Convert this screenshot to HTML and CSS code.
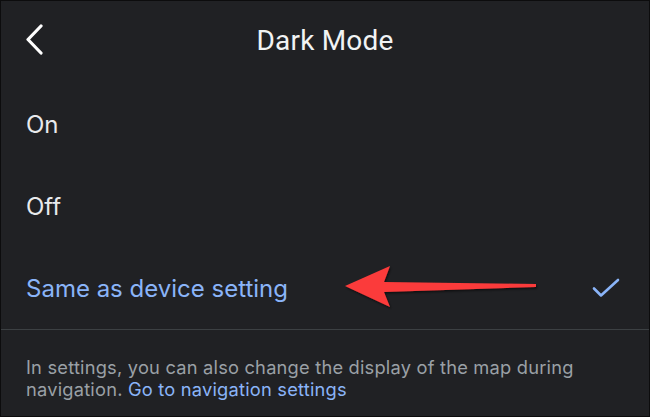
FILE: index.html
```html
<!DOCTYPE html>
<html>
<head>
<meta charset="utf-8">
<link rel="stylesheet" href="styles.css">
</head>
<body>
<div class="screen">
  <header class="topbar">
    <div class="back">
      <svg width="22" height="32" viewBox="0 0 22 32"><path d="M17 2 L4 15.5 L17 29" fill="none" stroke="#ffffff" stroke-width="3.2" stroke-linecap="round" stroke-linejoin="round"/></svg>
    </div>
    <h1 class="title">Dark Mode</h1>
    <div></div>
  </header>
  <ul class="options">
    <li class="option">On</li>
    <li class="option">Off</li>
    <li class="option selected">
      <span>Same as device setting</span>
      <svg class="check" width="30" height="22" viewBox="0 0 30 22"><path d="M3 11.5 L10 18.5 L27 3" fill="none" stroke="#8ab4f8" stroke-width="2.6" stroke-linecap="round" stroke-linejoin="round"/></svg>
    </li>
  </ul>
  <p class="note">In settings, you can also change the display of the map during navigation. <a class="link">Go to navigation settings</a></p>
  <svg class="arrow" width="200" height="50" viewBox="0 0 200 50">
    <defs><filter id="sh" x="-10%" y="-30%" width="120%" height="160%"><feDropShadow dx="1" dy="1.5" stdDeviation="1.2" flood-color="#000" flood-opacity="0.6"/></filter></defs>
    <path filter="url(#sh)" d="M2 22 L47 2 L41 18 L193 20 L193 23 L41 28 L47 43 Z" fill="#fb3b3b"/>
  </svg>
</div>
</body>
</html>
```
FILE: styles.css
```css
* { box-sizing: border-box; }
html, body { margin: 0; padding: 0; background: #202124; }
.screen {
  position: relative;
  width: 650px;
  height: 417px;
  background: #202124;
  border: 1px solid #0c0c0d;
  font-family: Inter, "Noto Sans", sans-serif;
  overflow: hidden;
}
.topbar {
  display: grid;
  grid-template-columns: 1fr auto 1fr;
  align-items: center;
  height: 78px;
  padding: 0 23px;
}
.back { display: flex; align-items: center; height: 32px; }
.title {
  margin: 0;
  font-family: Roboto, sans-serif;
  font-weight: 400;
  font-size: 28px;
  color: #f1f3f4;
  letter-spacing: 0.2px;
}
.options { list-style: none; margin: 0; padding: 0; margin-top: 4px; border-bottom: 1px solid #3c4043; }
.option {
  height: 82px;
  display: flex;
  align-items: center;
  justify-content: space-between;
  padding: 0 28px 0 25px;
  font-size: 24px;
  color: #e8eaed;
}
.option.selected { color: #8ab4f8; }
.note {
  margin: 0;
  padding: 26px 20px 0 25px;
  font-size: 18.3px;
  letter-spacing: 0.2px;
  line-height: 22px;
  color: #9aa0a6;
}
.link { color: #8ab4f8; }
.arrow { position: absolute; left: 342px; top: 263px; }
```
